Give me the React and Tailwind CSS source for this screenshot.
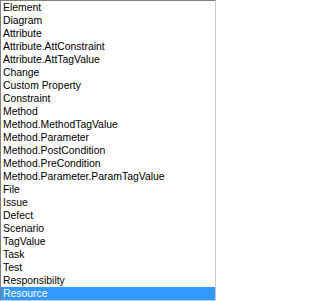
import React from "react";

const items = [
  "Element",
  "Diagram",
  "Attribute",
  "Attribute.AttConstraint",
  "Attribute.AttTagValue",
  "Change",
  "Custom Property",
  "Constraint",
  "Method",
  "Method.MethodTagValue",
  "Method.Parameter",
  "Method.PostCondition",
  "Method.PreCondition",
  "Method.Parameter.ParamTagValue",
  "File",
  "Issue",
  "Defect",
  "Scenario",
  "TagValue",
  "Task",
  "Test",
  "Responsibilty",
  "Resource",
];

export default function App() {
  return (
    <div className="w-[216px] h-[301px] bg-white border-t border-l border-r border-b border-t-[#7f7f7f] border-l-[#7f7f7f] border-r-[#c9c9d0] border-b-[#c9c9d0] overflow-hidden flex flex-col font-['Liberation_Sans',Arial,sans-serif] text-[10.4px]">
      {items.map((t, i) => (
        <div
          key={t}
          className={
            i === items.length - 1
              ? "h-[13px] leading-[13px] pl-[2px] bg-[#3399ff] text-white whitespace-nowrap"
              : "h-[13px] leading-[13px] pl-[2px] text-black whitespace-nowrap"
          }
        >
          {t}
        </div>
      ))}
    </div>
  );
}
